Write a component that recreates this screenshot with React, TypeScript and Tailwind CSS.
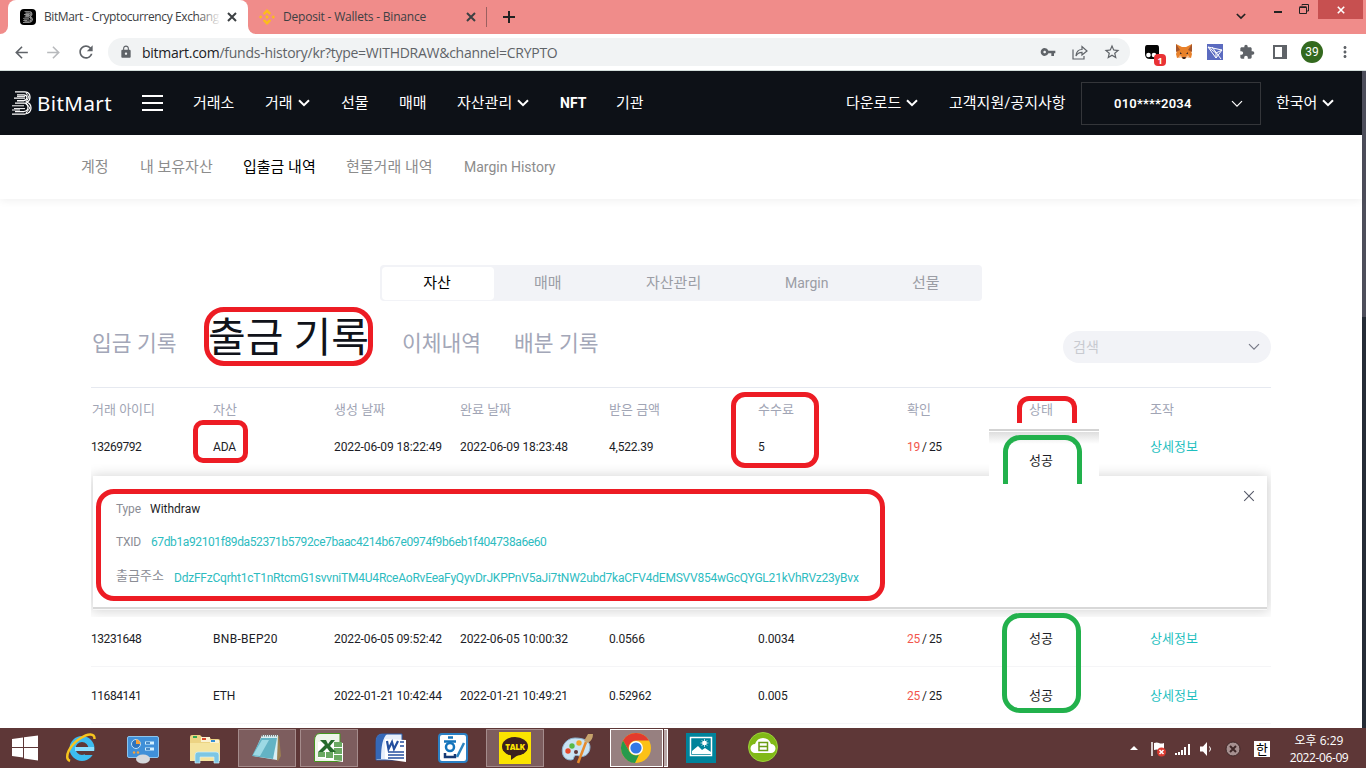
import type { ReactNode } from "react";
import { MdVpnKey, MdLock, MdExtension, MdStarBorder, MdRefresh, MdArrowBack, MdArrowForward, MdMoreVert } from "react-icons/md";

const ui = "font-['Open_Sans','Noto_Sans_CJK_KR',sans-serif]";

function Chevron({ size = "w-3", w = 2 }: { size?: string; w?: number }) {
  return (
    <svg viewBox="0 0 12 8" className={`${size} shrink-0`} fill="none" stroke="currentColor" strokeWidth={w}>
      <path d="M1 1.2 6 6.2 11 1.2" />
    </svg>
  );
}

function Cross({ className }: { className: string }) {
  return (
    <svg viewBox="0 0 10 10" className={className} fill="none" stroke="currentColor">
      <path d="M1 1 9 9M9 1 1 9" />
    </svg>
  );
}

function BMark({ className }: { className: string }) {
  return (
    <svg viewBox="0 0 20 24" className={className} fill="none" stroke="currentColor" strokeWidth="1.25">
      <path d="M3 .8h10q5 .5 5 5.2 0 4-3.500 5.200Q19 12.500 19 17q0 5-6 6H0" />
      <path d="M5 3.800h7q3 .4 3 2.700t-3 3.200H5M2 7h11M5 9.800h7M3 12h9q4 1 4 4.500T12 20.500H3" />
      <path d="M0 14.800h12M2 17.600h11M5 5.400h8M0 19h8M14 2l3 4-3 5M14 12l4 5-4 5" strokeWidth="1" />
    </svg>
  );
}

function BrowserTabs() {
  return (
    <div className={`flex h-[34px] shrink-0 items-stretch bg-[#f08c8a] text-[12px] text-[#3c4043] ${ui}`}>
      <div className="w-2 bg-white"><div className="h-full rounded-br-lg bg-[#f08c8a]" /></div>
      <div className="flex w-[240px] items-center rounded-t-lg bg-white pl-3">
        <div className="mr-2 grid size-4 place-items-center rounded bg-black text-[#ddd]">
          <BMark className="h-3 w-2.5" />
        </div>
        <div className="relative w-[177px] overflow-hidden whitespace-nowrap tracking-[-0.4px]">
          BitMart - Cryptocurrency Exchang
          <span className="absolute right-0 top-0 h-full w-6 bg-linear-to-l from-white to-transparent" />
        </div>
        <Cross className="ml-[6px] size-[10px] stroke-2" />
      </div>
      <div className="w-2 bg-white"><div className="h-full rounded-bl-lg bg-[#f08c8a]" /></div>
      <div className="flex w-[230px] items-center pl-[3px]">
        <svg viewBox="0 0 16 16" className="mr-2 size-4" fill="#fcbd1b">
          <path d="m8 0 4.200 4.200-1.700 1.700L8 3.400 5.500 5.900 3.800 4.200zM1.700 6.300 3.400 8 1.700 9.700 0 8zM14.300 6.300 16 8l-1.700 1.700L12.600 8zM8 6.100 9.900 8 8 9.900 6.100 8zM5.500 10.100 8 12.600l2.500-2.500 1.700 1.700L8 16l-4.200-4.200z" />
        </svg>
        <span className="w-[181px] tracking-[-0.2px] whitespace-nowrap">Deposit - Wallets - Binance</span>
        <Cross className="ml-[2px] size-[10px] stroke-2" />
      </div>
      <span className="my-[7px] w-px bg-[#9b6060]" />
      <svg viewBox="0 0 12 12" className="ml-4 w-3 text-[#222]" stroke="currentColor" strokeWidth="2"><path d="M6 0v12M0 6h12" /></svg>
      <div className="ml-auto flex items-start pr-[3px] text-[#222]">
        <span className="mr-[28px] mt-[13px]"><Chevron size="w-[10px]" /></span>
        <span className="mt-[11px] h-[2px] w-2 bg-[#222]" />
        <svg viewBox="0 0 10 10" className="ml-[17px] mr-[9px] mt-1 size-[10px]" fill="none" stroke="currentColor">
          <path d="M3 1.500V.5h6.500V7H8" /><path d="M.5 3.500h7v6h-7z" /><path d="M.5 3h7" strokeWidth="1.500" />
        </svg>
        <div className="grid h-[19px] w-[45px] place-items-center bg-[#c75050] text-white"><Cross className="size-2 stroke-2" /></div>
      </div>
    </div>
  );
}

function Toolbar() {
  return (
    <div className={`flex h-[37px] shrink-0 items-center border-b border-[#d3dedb] bg-white text-[#5f6368] ${ui}`}>
      <MdArrowBack className="ml-3 size-[19px]" />
      <MdArrowForward className="ml-[13px] size-[19px] text-[#b8babd]" />
      <MdRefresh className="ml-[13px] size-5" />
      <div className="ml-3 flex h-7 w-[1022px] items-center rounded-full bg-[#f1f3f4] pr-[9px]">
        <MdLock className="ml-[11px] size-[14px]" />
        <span className="ml-[9px] text-[14px] tracking-[-0.26px]"><span className="text-[#202124]">bitmart.com</span>/funds-history/kr?type=WITHDRAW&amp;channel=CRYPTO</span>
        <MdVpnKey className="ml-auto size-4" />
        <svg viewBox="0 0 16 16" className="ml-4 size-4" fill="none" stroke="currentColor" strokeWidth="1.200">
          <path d="M1 5.500V15h11v-3M4 12c.3-4 2-6.500 6-6.500V2.500L15 7l-5 4V8.400c-3 0-4.600 1-6 3.600z" />
        </svg>
        <MdStarBorder className="ml-[15px] size-[18px]" />
      </div>
      <div className="relative ml-[14px] size-4">
        <svg viewBox="0 0 16 16" className="size-4"><path d="M3 1h10q2 0 2 3v8l-2 3H6q-5 0-5-5V4q0-3 2-3z" fill="#050505" /><circle cx="4.500" cy="11" r="2.300" fill="#fff" /><circle cx="10" cy="11" r="2.300" fill="#fff" /></svg>
        <span className="absolute left-[10px] top-[10px] grid h-3 w-3 place-items-center rounded-sm bg-[#e93235] text-[9px] font-bold text-white">1</span>
      </div>
      <svg viewBox="0 0 18 16" className="ml-[15px] h-4 w-[18px]">
        <path d="m1 0 6 3h4l6-3-1 7 1 3-1 4-4-1-2 2H8l-2-2-4 1-1-4 1-3z" fill="#e8812a" />
        <path d="m1 0 4 6-4 2zM17 0l-4 6 4 2z" fill="#a5552a" /><path d="m5 8 2 2H5zM13 8l-2 2h2zM7 13h4l-1 2H8z" fill="#3a2a28" /><path d="m5 11-2 3 4-1zM13 11l2 3-4-1z" fill="#f3b98b" />
      </svg>
      <svg viewBox="0 0 16 16" className="ml-[14px] size-4"><path d="M0 0h16v16H0z" fill="#5b6bc0" /><path d="m1 3 14 3-6 8zM1 3l8 6v5M9 9l6-3M5 3l9 12" fill="none" stroke="#fff" /></svg>
      <MdExtension className="ml-4 size-4" />
      <svg viewBox="0 0 14 14" className="ml-[18px] size-[14px]"><path d="M1 1h12v12H1z" fill="none" stroke="currentColor" strokeWidth="2" /><path d="M9 1h4v12H9z" fill="currentColor" /></svg>
      <span className="ml-[14px] grid size-[22px] place-items-center rounded-full bg-[#33691e] font-['Roboto'] text-[12px] text-white">39</span>
      <MdMoreVert className="ml-[13px] size-[18px]" />
    </div>
  );
}

function NavItem({ children, w, arrow }: { children: ReactNode; w: string; arrow?: boolean }) {
  return (
    <div className={`flex shrink-0 items-center whitespace-nowrap ${w}`}>
      {children}
      {arrow && <span className="ml-[5px]"><Chevron /></span>}
    </div>
  );
}

function SiteNav() {
  return (
    <nav className="flex h-16 shrink-0 items-center bg-[#0d1117] pl-3 text-[15px] text-white">
      <div className="flex w-[130px] items-center">
        <BMark className="h-6 w-[20px]" />
        <span className="ml-[5px] font-['Noto_Sans'] text-[20.500px] leading-6 tracking-[0.45px]">BitMart</span>
      </div>
      <div className="flex w-[51px] flex-col gap-[5px]">
        <span className="h-[2px] w-[21px] bg-white" /><span className="h-[2px] w-[21px] bg-white" /><span className="h-[2px] w-[21px] bg-white" />
      </div>
      <NavItem w="w-[72px]">거래소</NavItem>
      <NavItem w="w-[76px]" arrow>거래</NavItem>
      <NavItem w="w-[58px]">선물</NavItem>
      <NavItem w="w-[58px]">매매</NavItem>
      <NavItem w="w-[103px]" arrow>자산관리</NavItem>
      <NavItem w="w-[56px]"><b className="text-[14px]">NFT</b></NavItem>
      <NavItem w="w-[230px]">기관</NavItem>
      <NavItem w="w-[103px]" arrow>다운로드</NavItem>
      <NavItem w="w-[132px]">고객지원/공지사항</NavItem>
      <div className="flex h-[43px] w-[180px] items-center justify-between border border-[#34363a] pl-8 pr-[17px] pt-px text-[13px] font-semibold">
        <span className="tracking-[0.2px]">010****2034</span><Chevron w={1.2} />
      </div>
      <NavItem w="ml-[15px] w-[62px]" arrow>한국어</NavItem>
    </nav>
  );
}

const cols = "grid grid-cols-[121px_121px_126px_149px_149px_149px_122px_121px_121px] items-center pl-px";

type Row = { id: string; coin: string; made: string; done: string; amount: string; fee: string; conf: string; status: string };
const rows: Row[] = [
  { id: "13269792", coin: "ADA", made: "2022-06-09 18:22:49", done: "2022-06-09 18:23:48", amount: "4,522.39", fee: "5", conf: "19", status: "" },
  { id: "13231648", coin: "BNB-BEP20", made: "2022-06-05 09:52:42", done: "2022-06-05 10:00:32", amount: "0.0566", fee: "0.0034", conf: "25", status: "성공" },
  { id: "11684141", coin: "ETH", made: "2022-01-21 10:42:44", done: "2022-01-21 10:49:21", amount: "0.52962", fee: "0.005", conf: "25", status: "성공" },
];

function DataRow({ r, h }: { r: Row; h: string }) {
  return (
    <div className={`${cols} ${h} text-[12px] whitespace-nowrap text-[#1c1d26]`}>
      <span className="-ml-px tracking-[-0.45px]">{r.id}</span>
      <span className={r.coin.length > 3 ? "tracking-[0.3px]" : "tracking-[-0.15px]"}>{r.coin}</span>
      <span className="tracking-[-0.1px]">{r.made}</span>
      <span className="tracking-[-0.1px]">{r.done}</span>
      <span className="tracking-[-0.2px]">{r.amount}</span>
      <span className="tracking-[-0.1px]">{r.fee}</span>
      <span className="tracking-[-0.3px] [word-spacing:-0.5px]"><span className="text-[#f2564d]">{r.conf}</span> / 25</span>
      <span className="text-[13px]">{r.status}</span>
      <span className="text-[13px] text-[#1fbfbf]">상세정보</span>
    </div>
  );
}

function Records() {
  return (
    <main className="flex min-h-0 flex-1 flex-col overflow-hidden bg-white pl-[91px]">
      <div className="ml-[289px] mt-[66px] flex h-9 w-[602px] shrink-0 items-center rounded bg-[#f2f3f7] text-[15px] text-[#9b9da5]">
        <div className="ml-[2px] grid h-[33px] w-[112px] place-items-center rounded bg-white pr-[2px] text-black">자산</div>
        <span className="ml-[40px] w-[112px]">매매</span>
        <span className="w-[139px]">자산관리</span>
        <span className="w-[127px] text-[14px]">Margin</span>
        <span>선물</span>
      </div>
      <div className="flex h-[86px] w-[1180px] shrink-0 items-center whitespace-nowrap pl-px pt-px text-[21.500px] text-[#a3a7b8]">
        <span className="w-[116px]">입금 기록</span>
        <span className="w-[194px] pb-[13px] text-[41px] leading-none text-[#10131a]">출금 기록</span>
        <span className="w-[112px]">이체내역</span>
        <span>배분 기록</span>
        <div className="mb-[-5px] ml-auto flex h-8 w-[208px] items-center justify-between rounded-full bg-[#f2f3f7] pl-[10px] pr-[11px] text-[14px] text-[#c8cad0]">
          <span>검색</span><span className="text-[#777987]"><Chevron w={1.2} /></span>
        </div>
      </div>
      <div className="h-px w-[1180px] shrink-0 bg-[#e6e9f0]" />
      <div className={`${cols} h-[42px] w-[1180px] shrink-0 pt-px text-[13px] text-[#a1a5b5]`}>
        <span>거래 아이디</span><span>자산</span><span>생성 날짜</span><span>완료 날짜</span><span>받은 금액</span><span>수수료</span><span>확인</span><span>상태</span><span>조작</span>
      </div>
      <DataRow r={rows[0]} h="h-[34px] shrink-0" />
      <div className="w-[1180px] shrink-0 overflow-hidden px-[2px] pb-[10px] pr-1 pt-[12px]">
        <section className="flex h-[131px] flex-col bg-white pl-[23px] pt-[24px] text-[12px] text-[#8b8d95] shadow-[0_2px_0_#d8d8d8,0_3px_0_#f8f8f8,0_2px_12px_2px_rgba(0,0,0,0.18)]">
          <div className="flex h-[18px] items-center">
            <span className="w-[34px] tracking-[-0.15px]">Type</span><span className="text-[#1c1d26]">Withdraw</span>
            <Cross className="mb-[26px] ml-auto mr-[12px] size-3 stroke-[0.9] text-[#555968]" />
          </div>
          <div className="mt-[15px] flex h-[18px] items-center">
            <span className="w-[35px] tracking-[-0.2px]">TXID</span><span className="tracking-[-0.39px] text-[#2dbcbf]">67db1a92101f89da52371b5792ce7baac4214b67e0974f9b6eb1f404738a6e60</span>
          </div>
          <div className="mt-[15px] flex h-[24px] items-center">
            <span className="w-[58px] pb-[5px] text-[13px]">출금주소</span><span className="tracking-[-0.22px] text-[#2dbcbf]">DdzFFzCqrht1cT1nRtcmG1svvniTM4U4RceAoRvEeaFyQyvDrJKPPnV5aJi7tNW2ubd7kaCFV4dEMSVV854wGcQYGL21kVhRVz23yBvx</span>
          </div>
        </section>
      </div>
      <div className="mt-[-7px] w-[1180px] shrink-0">
        <DataRow r={rows[1]} h="h-[57px] border-b border-[#f5f5f7] pt-[2px]" />
        <DataRow r={rows[2]} h="h-[57px] border-b border-[#f5f5f7] pt-[2px]" />
      </div>
    </main>
  );
}

function Markers() {
  return (
    <div className="pointer-events-none">
      <div className="absolute left-[204px] top-[307px] h-[59px] w-[169px] rounded-[20px] border-5 border-[#ed1c24]" />
      <div className="absolute left-[193px] top-[420px] h-[43px] w-[55px] rounded-[10px] border-5 border-[#ed1c24]" />
      <div className="absolute left-[731px] top-[392px] h-[76px] w-[88px] rounded-[14px] border-5 border-[#ed1c24]" />
      <div className="absolute left-[1017px] top-[396px] h-[27px] w-[60px] rounded-t-[12px] border-5 border-b-0 border-[#ed1c24]" />
      <div className="absolute left-[989px] top-[429px] h-[55px] w-[110px] bg-white">
        <div className="h-[2px] bg-[#d3d3d3]" />
        <div className="mt-px h-3 bg-linear-to-b from-[#dedede] to-white" />
      </div>
      <div className="absolute left-[1003px] top-[435px] h-[49px] w-[79px] rounded-t-[17px] border-5 border-b-0 border-[#22b14c] pl-[21px] pt-[11px] text-[13px] text-[#1c1d26]">성공</div>
      <div className="absolute left-[96px] top-[489px] h-[112px] w-[789px] rounded-[18px] border-5 border-[#ed1c24]" />
      <div className="absolute left-[1002px] top-[613px] h-[100px] w-[79px] rounded-[18px] border-5 border-[#22b14c]" />
    </div>
  );
}

function Slot({ children, open }: { children: ReactNode; open?: boolean }) {
  return (
    <div className={`mr-1 mt-px grid h-[38px] w-[58px] shrink-0 place-items-center ${open ? "border border-[#a58c8c] bg-[#7d5d5e]" : ""}`}>
      <svg viewBox="0 0 32 32" className="size-8">{children}</svg>
    </div>
  );
}

function Taskbar() {
  return (
    <footer className={`flex h-10 shrink-0 bg-[#5e3737] text-white ${ui}`}>
      <div className="flex w-[52px] items-center pl-3">
        <svg viewBox="0 0 27 26" className="h-[26px] w-[27px]" fill="#fff"><path d="m0 4 11-1.500V12H0zM12 2.300 26 .4V12H12zM0 13h11v9.500L0 21zM12 13h14v12.500l-14-2z" /></svg>
      </div>
      <Slot>
        <circle cx="17" cy="16.500" r="9.500" fill="none" stroke="#3cbcf0" strokeWidth="6" /><path d="M10 17h19" stroke="#8de0ff" strokeWidth="4" /><path d="M20 19h13v4H20z" fill="#5e3737" />
        <path d="M5 29C-2 26 5 13 15 6.500 23 1 30 1 29.500 7" fill="none" stroke="#f7c51e" strokeWidth="2.500" />
      </Slot>
      <Slot>
        <rect x=".5" y="4.500" width="31" height="21" rx="1.500" fill="#3f8fd8" stroke="#8cc4ec" /><circle cx="9" cy="12" r="4.500" fill="#2d73bd" stroke="#bfe2fb" /><path d="M9 12V7.500a4.500 4.500 0 0 1 4.500 4.500z" fill="#f6a23b" />
        <path d="M18 11h9M18 17h9" stroke="#d2f0ff" strokeWidth="3" /><path d="M19 11h4M19 17h4" stroke="#1d67b4" strokeWidth="1.500" /><circle cx="7" cy="20.500" r="1.200" fill="#f6a23b" /><circle cx="11" cy="20.500" r="1.200" fill="#f6a23b" /><ellipse cx="16" cy="27" rx="7" ry="4.500" fill="#d5d8dc" />
      </Slot>
      <Slot>
        <path d="M1 5q0-2 2-2h8l2 2h7l2 2h7q2 0 2 2v20H1z" fill="#ecd383" /><path d="M12 5h9v5h-9zM21 8h9v5h-9z" fill="#faf2d3" /><path d="M4 4h4v2H4z" fill="#34a853" /><path d="M13 6h4v2h-4z" fill="#d94a2c" /><path d="M22 8h4v2h-4z" fill="#338fd6" /><path d="M1 11h30v18H1z" fill="#f5e49f" />
        <path d="M6 31v-8q0-3 3-3h18q3 0 3 3v8h-5v-6H11v6z" fill="#7cc6e4" stroke="#d2effa" strokeWidth=".7" />
      </Slot>
      <Slot open>
        <path d="M10 4h18l2 20-3 5-3-2z" fill="#9c8052" /><path d="M11 3h16l-1 25-24-4z" fill="#d8eef2" /><path d="M10 6h16l-4 21-21-3z" fill="#63b3c4" /><path d="M11 8h7L9 24l-7-1z" fill="#9dd9e4" /><path d="M11 3.500h16" stroke="#777" strokeDasharray="1 1" strokeWidth="2" />
      </Slot>
      <Slot open>
        <path d="M7 1.500h20v28H1.500V9q0-7.500 5.500-7.500z" fill="#eef5e9" stroke="#45951f" /><path d="m5 10 25 1v19L5 26z" fill="#fff" /><path d="M21 10h8v5h-8zM21 16h8v6h-8zM21 23h8v6l-8-1zM5 20h7v5H5zM13 20h7v6h-7z" fill="#6aa962" /><path d="M7 8h6l2 4 3-4h4l-5 6 6 6h-6l-3-4-4 4H5l7-7z" fill="#256b2b" />
      </Slot>
      <Slot>
        <path d="M7 2h20v26H1V10q0-8 6-8z" fill="#e7effb" stroke="#2a5caa" /><path d="M7 2h5Q6 7 6 27H1V10q0-8 6-8z" fill="#3568b8" /><path d="m10 7 21 1v22l-21-3z" fill="#fff" /><path d="m12 9 1.500 8 3.500-7 2 7 4-8" fill="none" stroke="#244f9e" strokeWidth="2.200" /><path d="M25 10h4M25 14h4M13 20h16M13 23h16M13 26h16" stroke="#244f9e" strokeWidth="1.700" />
      </Slot>
      <Slot>
        <rect x="2" y="2" width="28" height="28" rx="3" fill="#fff" stroke="#2b80c4" strokeWidth="2" /><path d="M11 5.500h5M7 9.500h12" stroke="#1474bb" strokeWidth="2.500" /><circle cx="13" cy="15" r="4" fill="none" stroke="#1474bb" strokeWidth="2.500" /><path d="M8 21v4h10v-3" fill="none" stroke="#153a75" strokeWidth="2.500" /><path d="m20 25 7-14" stroke="#2c84bf" strokeWidth="2.500" />
      </Slot>
      <Slot open>
        <path d="M0 0h32v32H0z" fill="#fbe300" /><ellipse cx="16" cy="14.500" rx="13" ry="9.500" fill="#3b1e1e" /><path d="M12 22v6l7-5z" fill="#3b1e1e" /><text x="16" y="17.800" textAnchor="middle" fill="#fbe300" fontSize="8" fontWeight="800" fontFamily="Open Sans" letterSpacing="-.3">TALK</text>
      </Slot>
      <Slot>
        <path d="M14 6C5 6-1 15 2 23q2 5 8 5 3 0 3-3 1-3 5-1c5 2 11-2 11-9 0-6-6-9-15-9z" fill="#c9e3f4" stroke="#8cb3cf" /><circle cx="7" cy="19" r="2.700" fill="#e6482b" /><circle cx="11" cy="14" r="2.700" fill="#58b947" /><circle cx="18" cy="11" r="2.700" fill="#f2a62b" /><circle cx="15" cy="20" r="2" fill="#5e3737" /><path d="m17 31 8-21" stroke="#e58a2d" strokeWidth="2.500" /><path d="m23 9 4-7 5 0q0 6-5 9z" fill="#c8a36c" />
      </Slot>
      <div className="mr-1 mt-px flex h-[38px] w-[58px] shrink-0 gap-px">
        <div className="grid w-[54px] place-items-center border border-white bg-[#978080]">
          <svg viewBox="0 0 32 32" className="mr-[2px] size-8">
            <circle cx="16" cy="16" r="15" fill="#fbc116" /><path d="M3 8.500A15 15 0 0 1 29 8.500H16a7.500 7.500 0 0 0-6.500 11.200z" fill="#e33b2e" /><path d="M3 8.500 9.500 19.700A7.500 7.500 0 0 0 19 22.800L15 31A15 15 0 0 1 3 8.500z" fill="#269a4c" /><circle cx="16" cy="16" r="7" fill="#fff" /><circle cx="16" cy="16" r="5.600" fill="#3478e5" />
          </svg>
        </div>
        <div className="w-1 border border-l-0 border-white bg-[#b9a8a8]" />
      </div>
      <Slot>
        <path d="M1 1h30v30H1z" fill="#00839b" /><path d="M5.500 5.500h21v18h-21z" fill="#00839b" stroke="#fff" strokeWidth="1.500" /><path d="m7 22v-3l6-5 4 4 3-2 6 4v2z" fill="#fff" /><circle cx="19.500" cy="11" r="2.300" fill="#fff" /><path d="M19.500 7v8M15.500 11h8M16.700 8.200l5.600 5.600M22.300 8.200l-5.600 5.600" stroke="#fff" strokeWidth=".7" />
      </Slot>
      <Slot>
        <circle cx="16" cy="15" r="14.500" fill="#81b916" stroke="#9bd03a" /><path d="M8 21a4.500 4.500 0 0 1 0-9q2-6 8-6t8 6a4.500 4.500 0 0 1 0 9z" fill="#fff" /><path d="M12 10.500h8.500v8H12zM12 14.500h8" fill="none" stroke="#6b9d14" strokeWidth="1.500" />
      </Slot>
      <div className="ml-auto flex items-center pr-[17px]">
        <svg viewBox="0 0 8 4" className="mr-[13px] w-2" fill="#fff"><path d="m0 4 4-4 4 4z" /></svg>
        <svg viewBox="0 0 16 16" className="mr-[8px] mt-[2px] size-4"><path d="M1 1v14" stroke="#fff" strokeWidth="1.500" /><path d="M3 2q3-1 5 0t5 0v7q-3 1-5 0T3 9z" fill="#fff" /><circle cx="10.500" cy="11" r="4.500" fill="#dc3a30" /><path d="m8.500 9 4 4m0-4-4 4" stroke="#fff" strokeWidth="1.500" /></svg>
        <svg viewBox="0 0 16 12" className="mr-[9px] mt-[3px] h-3 w-4" fill="#fff"><path d="M0 9h2v2H0zM3 8h2v3H3zM6 6h2v5H6zM9 3h2v8H9zM13 0h2v11h-2z" /></svg>
        <svg viewBox="0 0 14 14" className="mr-[11px] mt-[2px] size-[14px]"><path d="M0 4.500h3L7 0v14L3 9.500H0z" fill="#fff" /><path d="M9.500 4.500q2 2.500 0 5" stroke="#fff" fill="none" /></svg>
        <svg viewBox="0 0 16 16" className="mr-[13px] mt-[2px] size-4"><circle cx="8" cy="8" r="7" fill="#a69090" stroke="#3f2828" /><path d="m5 5 6 6m0-6-6 6" stroke="#3f2828" strokeWidth="2" /></svg>
        <span className="mr-[19px] mt-[2px] grid size-4 place-items-center bg-white text-[13px] leading-none text-black">한</span>
        <div className="w-[60px] pt-px text-center text-[12px] leading-[17px] whitespace-nowrap"><div className="-mx-1">오후 6:29</div><div className="-mx-1 tracking-[-0.4px]">2022-06-09</div></div>
      </div>
    </footer>
  );
}

export default function App() {
  return (
    <div className="relative flex h-[768px] w-[1366px] flex-col overflow-hidden bg-white font-['Roboto','Noto_Sans_CJK_KR',sans-serif]">
      <BrowserTabs />
      <Toolbar />
      <div className="flex min-h-0 flex-1">
        <div className="flex w-[1362px] flex-col">
          <SiteNav />
          <div className="z-10 flex h-16 shrink-0 items-center bg-white pl-[81px] text-[15px] whitespace-nowrap text-[#8c8c8c] shadow-[0_2px_8px_rgba(0,0,0,0.06)]">
            <span className="w-[59px]">계정</span>
            <span className="w-[103px]">내 보유자산</span>
            <span className="w-[103px] text-black">입출금 내역</span>
            <span className="w-[118px]">현물거래 내역</span>
            <span className="text-[14px]">Margin History</span>
          </div>
          <Records />
        </div>
        <div className="w-1 bg-[#252c36]"><div className="h-[246px] bg-[#4d4e5b]" /></div>
      </div>
      <Taskbar />
      <Markers />
    </div>
  );
}
